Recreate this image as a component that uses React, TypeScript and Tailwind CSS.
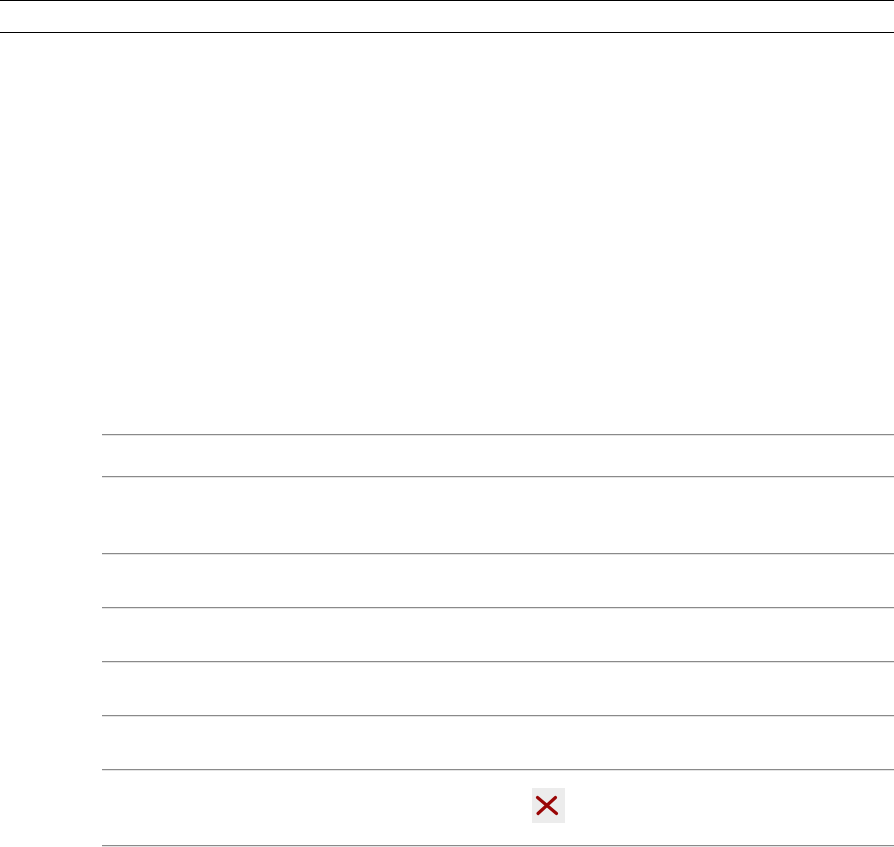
import React from "react";

function Sep() {
  return (
    <div className="flex flex-col">
      <div className="h-px bg-[#8a8a8a]" />
      <div className="h-px bg-[#e4e4e4]" />
    </div>
  );
}

export default function App() {
  const rows = [40, 75, 52, 52, 52, 52];
  return (
    <div className="w-[894px] h-[847px] bg-white overflow-hidden flex flex-col" style={{ fontFamily: '"Liberation Sans", Arial, sans-serif' }}>
      <div className="h-[33px] border-t border-b border-black shrink-0" />
      <div className="h-[401px] shrink-0" />
      <div className="ml-[102px] flex flex-col">
        <Sep />
        {rows.map((h, i) => (
          <React.Fragment key={i}>
            <div style={{ height: h }} />
            <Sep />
          </React.Fragment>
        ))}
        <div className="h-[74px] flex items-start pl-[430px] pt-[17px]">
          <div className="w-[33px] h-[35px] bg-[#ececec] flex items-center justify-center">
            <svg width="33" height="35" viewBox="0 0 33 35">
              <path d="M5.5 9.5 L24.5 25.5" stroke="#9a0606" strokeWidth="3.2" strokeLinecap="round" />
              <path d="M23.5 9.5 L6 25.5" stroke="#9a0606" strokeWidth="3.2" strokeLinecap="round" />
            </svg>
          </div>
        </div>
        <Sep />
      </div>
    </div>
  );
}
